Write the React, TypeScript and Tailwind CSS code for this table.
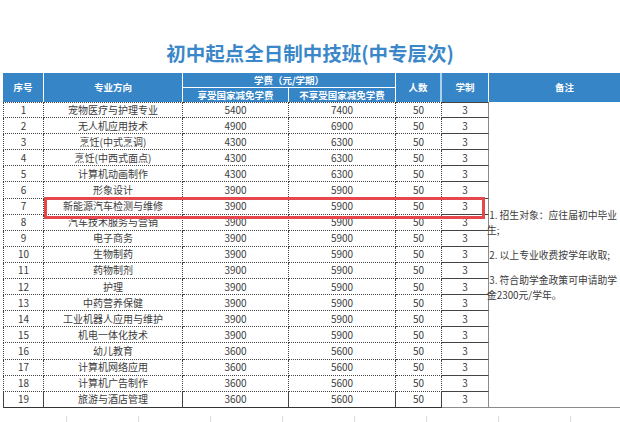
const rows: [string, string, string][] = [
  ["宠物医疗与护理专业", "5400", "7400"],
  ["无人机应用技术", "4900", "6900"],
  ["烹饪(中式烹调)", "4300", "6300"],
  ["烹饪(中西式面点)", "4300", "6300"],
  ["计算机动画制作", "4300", "6300"],
  ["形象设计", "3900", "5900"],
  ["新能源汽车检测与维修", "3900", "5900"],
  ["汽车技术服务与营销", "3900", "5900"],
  ["电子商务", "3900", "5900"],
  ["生物制药", "3900", "5900"],
  ["药物制剂", "3900", "5900"],
  ["护理", "3900", "5900"],
  ["中药营养保健", "3900", "5900"],
  ["工业机器人应用与维护", "3900", "5900"],
  ["机电一体化技术", "3900", "5900"],
  ["幼儿教育", "3600", "5600"],
  ["计算机网络应用", "3600", "5600"],
  ["计算机广告制作", "3600", "5600"],
  ["旅游与酒店管理", "3600", "5600"],
];

const App = () => {
  const font = { fontFamily: '"Noto Sans CJK SC", "Noto Sans", sans-serif' };

  return (
    <div className="w-[620px] h-[422px] bg-white overflow-hidden" style={font}>
      {/* Title */}
      <div className="h-[73px] pt-[38px] text-center text-[19.5px] leading-[30px] font-bold text-[#3a87c9]">
        初中起点全日制中技班(中专层次)
      </div>

      {/* Table */}
      <div className="relative">
        <table className="ml-[3px] w-[637px] table-fixed border-separate border-spacing-0 text-center">
          <colgroup>
            <col className="w-[41px]" />
            <col className="w-[139px]" />
            <col className="w-[106px]" />
            <col className="w-[107px]" />
            <col className="w-[46px]" />
            <col className="w-[47px]" />
            <col className="w-[151px]" />
          </colgroup>
          <thead className="bg-[#3585c7] text-white font-bold text-[9.5px]">
            <tr className="h-[15px]">
              <th rowSpan={2} className="border-r border-white font-bold">序号</th>
              <th rowSpan={2} className="border-r border-white font-bold">专业方向</th>
              <th colSpan={2} className="border-r border-b border-white font-bold leading-[14px]">
                学费（元/学期）
              </th>
              <th rowSpan={2} className="border-r-2 border-[#a9d2f2] font-bold">人数</th>
              <th rowSpan={2} className="border-r border-white font-bold">学制</th>
              <th rowSpan={2} className="font-bold">备注</th>
            </tr>
            <tr className="h-[14px]">
              <th className="border-r border-white font-bold leading-[13px]">享受国家减免学费</th>
              <th className="border-r border-white font-bold leading-[13px] whitespace-nowrap">
                不享受国家减免学费
              </th>
            </tr>
          </thead>
          <tbody className="text-[10px] text-[#3c3c3c]">
            {rows.map(([name, a, b], i) => {
              const last = i === rows.length - 1;
              const bottom = last ? "border-b border-solid border-b-[#333]" : "border-b border-dotted border-b-[#444]";
              const top = i === 0 ? "border-t border-dotted border-t-[#444]" : "";
              const cell = `border-r border-dotted border-r-[#444] ${bottom} ${top} leading-[14px] p-0`;
              return (
                <tr key={i} className="h-[16.1px]">
                  <td className={`${cell} border-l border-l-[#444]`}>{i + 1}</td>
                  <td className={cell}>{name}</td>
                  <td className={cell}>{a}</td>
                  <td className={cell}>{b}</td>
                  <td className={cell}>50</td>
                  <td
                    className={`border-r border-solid border-r-[#8a8a8a] leading-[14px] p-0 ${top} ${
                      last ? "border-b border-solid border-b-[#8a8a8a]" : "border-b border-dotted border-b-[#444]"
                    }`}
                  >
                    3
                  </td>
                  {i === 0 && (
                    <td
                      rowSpan={19}
                      className="border-b border-solid border-b-[#8a8a8a] p-0 text-left align-middle text-[9.8px] leading-[15px] text-[#3c3c3c]"
                    >
                      <div className="-ml-[2px] flex flex-col gap-[10px] whitespace-nowrap pt-[2px]">
                        <div>
                          <div>&nbsp;1. 招生对象：应往届初中毕业</div>
                          <div>生;</div>
                        </div>
                        <div>&nbsp;2. 以上专业收费按学年收取;</div>
                        <div>
                          <div>&nbsp;3. 符合助学金政策可申请助学</div>
                          <div>金2300元/学年。</div>
                        </div>
                      </div>
                    </td>
                  )}
                </tr>
              );
            })}
          </tbody>
        </table>

        {/* Red highlight box over row 7 */}
        <div className="absolute left-[44px] top-[124px] w-[441px] h-[22px] border-[3px] border-[#e5474c]" />
      </div>

      {/* Faint gridlines of the next page */}
      <div className="flex pl-[66px] pt-[8px]">
        {Array.from({ length: 8 }).map((_, i) => (
          <div key={i} className="w-[72px] h-[8px] border-l border-[#dcdcdc] shrink-0" />
        ))}
      </div>
    </div>
  );
};

export default App;
